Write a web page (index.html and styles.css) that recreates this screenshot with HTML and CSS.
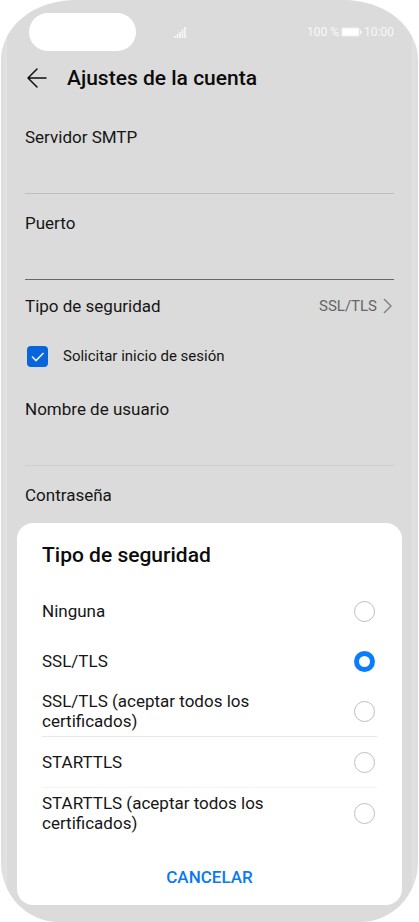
FILE: index.html
```html
<!DOCTYPE html>
<html lang="es">
<head>
<meta charset="utf-8">
<meta name="viewport" content="width=device-width, initial-scale=1">
<title>Ajustes de la cuenta</title>
<link rel="stylesheet" href="styles.css">
</head>
<body>
<div class="phone">
  <div class="status">
    <span class="camera"></span>
    <svg class="signal" width="12" height="11" viewBox="0 0 12 11" aria-hidden="true">
      <path d="M1 9v2M3.500 7v4M6 5v6M8.500 2.500v8.500M11 0v11" stroke="#f8f8f8" stroke-width="1.600"/>
    </svg>
    <span class="status-right">
      <span>100 %</span>
      <svg width="21" height="10" viewBox="0 0 21 10" aria-hidden="true">
        <rect x="0.500" y="0.500" width="18" height="9" rx="1.500" fill="#efefef"/>
        <rect x="1.500" y="1.500" width="16" height="7" fill="#fff"/>
        <rect x="19" y="3" width="1.500" height="4" rx="0.500" fill="#f6f6f6"/>
      </svg>
      <span>10:00</span>
    </span>
  </div>
  <header class="header">
    <button class="back" type="button" aria-label="Atrás">
      <svg width="20" height="20" viewBox="0 0 20 20" fill="none" stroke="#111" stroke-width="1.500" stroke-linecap="round" stroke-linejoin="round"><path d="M19 10H1M10 1L1 10l9 9"/></svg>
    </button>
    <h1>Ajustes de la cuenta</h1>
  </header>
  <main class="settings">
    <div class="field">
      <label for="smtp">Servidor SMTP</label>
      <input id="smtp" type="text">
    </div>
    <div class="field field-active">
      <label for="port">Puerto</label>
      <input id="port" type="text">
    </div>
    <button class="setting" type="button">
      <span>Tipo de seguridad</span>
      <span class="value">SSL/TLS
        <svg width="9" height="16" viewBox="0 0 9 16" fill="none" stroke="#858585" stroke-width="1.500"><path d="M1 1l7 7-7 7"/></svg>
      </span>
    </button>
    <label class="check"><input type="checkbox" checked><span>Solicitar inicio de sesión</span></label>
    <div class="field field-faint">
      <label for="user">Nombre de usuario</label>
      <input id="user" type="text">
    </div>
    <div class="field">
      <label for="pass">Contraseña</label>
      <input id="pass" type="password">
    </div>
  </main>
  <section class="sheet" role="dialog" aria-labelledby="sheet-title">
    <h2 id="sheet-title">Tipo de seguridad</h2>
    <div class="options">
      <label class="option"><span>Ninguna</span><input type="radio" name="security"></label>
      <label class="option"><span>SSL/TLS</span><input type="radio" name="security" checked></label>
      <label class="option option-line"><span>SSL/TLS (aceptar todos los certificados)</span><input type="radio" name="security"></label>
      <label class="option option-line option-faint"><span>STARTTLS</span><input type="radio" name="security"></label>
      <label class="option"><span>STARTTLS (aceptar todos los certificados)</span><input type="radio" name="security"></label>
    </div>
    <button class="cancel" type="button">CANCELAR</button>
  </section>
</div>
</body>
</html>
```
FILE: styles.css
```css
* { box-sizing: border-box; }
body {
  margin: 0;
  background: #fff;
  color: #161616;
  font: 17px/20px Roboto, sans-serif;
}
button, input { font: inherit; color: inherit; }
button { border: 0; padding: 0; background: none; cursor: pointer; }
h1, h2 { margin: 0; font-weight: 500; color: #0c0c0c; }
svg { display: block; flex: none; }

.phone {
  position: relative;
  min-height: 100vh;
  margin: 0 1px;
  padding: 0 24px;
  overflow: hidden;
  border-radius: 74px 74px 58px 58px / 60px;
  background: linear-gradient(90deg, #dddddd, #e2e2e2 6px, #dbdbdb 6px, #dbdbdb calc(100% - 6px), #e2e2e2 calc(100% - 6px), #dddddd);
}

.status {
  display: flex;
  align-items: center;
  height: 38px;
  margin-top: 13px;
  padding-left: 4px;
  color: #f8f8f8;
  font-size: 12px;
}
.camera { width: 107px; height: 38px; border-radius: 19px; background: #fff; }
.signal { margin-left: 38px; }
.status-right { display: flex; align-items: center; gap: 2px; margin-left: auto; }

.header { display: flex; align-items: center; gap: 20px; height: 54px; padding-left: 2px; }
.header h1 { font-size: 21px; line-height: 24px; }

.settings { display: flex; flex-direction: column; padding-top: 22px; }
.field { display: flex; flex-direction: column; border-bottom: 1px solid #bfbfbf; margin-bottom: 19px; }
.field input { width: 100%; height: 46px; padding: 0; border: 0; outline: 0; background: transparent; }
.field-active { border-color: #686868; margin-bottom: 16px; }
.field-faint { border-color: #cfcfcf; }
.setting { display: flex; justify-content: space-between; align-items: center; height: 20px; }
.value { display: flex; align-items: center; gap: 6px; padding-right: 2px; color: #666; font-size: 15px; }
.check { display: flex; align-items: center; gap: 15px; margin: 29px 0 32px 2px; height: 22px; font-size: 15px; }
.check input {
  appearance: none;
  width: 21px;
  height: 21px;
  margin: 0;
  border-radius: 4px;
  background: #0965dc url("data:image/svg+xml,%3Csvg xmlns='http://www.w3.org/2000/svg' viewBox='0 0 21 21'%3E%3Cpath d='M5 10.500l4 4 7.500-7.500' fill='none' stroke='%23e8eefa' stroke-width='1.600'/%3E%3C/svg%3E");
}

.sheet {
  position: absolute;
  right: 16px;
  bottom: 17px;
  left: 16px;
  padding: 20px 25px 18px;
  border-radius: 16px;
  background: #fff;
}
.sheet h2 { font-size: 21px; line-height: 24px; }
.options { margin-top: 19px; }
.option { display: flex; align-items: center; justify-content: space-between; min-height: 50px; }
.option span { max-width: 240px; }
.option-line { min-height: 51px; border-bottom: 1px solid #e8e8e8; }
.option-faint { border-color: #f3f3f3; }
.option input {
  appearance: none;
  flex: none;
  width: 21px;
  height: 21px;
  margin: 0 2px 0 0;
  border: 1px solid #bebebe;
  border-radius: 50%;
}
.option input:checked { border: 5px solid #0a7dff; }
.cancel { display: block; margin: 29px auto 0; color: #087af5; font-size: 17px; font-weight: 500; }
```
